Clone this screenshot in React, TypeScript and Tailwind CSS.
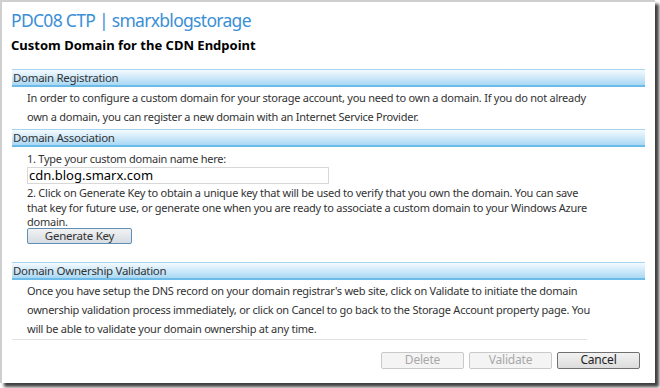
import React from "react";

// ========================
// Section header bar
// ========================

const SectionBar = ({ title }: { title: string }) => (
  <div className="mx-[10px] h-[18px] border-t border-[#a8d4f0] border-b-2 border-b-[#6dbbe8] bg-gradient-to-b from-[#f4fafe] to-[#a9d8f4] pl-[1px] text-[11.5px] leading-[16px] tracking-[-0.3px] text-[#333]">
    {title}
  </div>
);

const Btn = ({ label, disabled }: { label: string; disabled?: boolean }) => (
  <button
    className={
      disabled
        ? "h-[17px] w-[83px] rounded-[2px] border border-[#c9c9c9] bg-[#f4f4f4] text-[12px] leading-[14px] tracking-[-0.2px] text-[#a8a8a8]"
        : "h-[17px] w-[83px] rounded-[2px] border border-[#707070] bg-gradient-to-b from-[#f2f2f2] to-[#dcdcdc] text-[12px] leading-[14px] tracking-[-0.2px] text-[#222]"
    }
  >
    {label}
  </button>
);

export default function App() {
  return (
    <div className="h-[388px] w-[660px] bg-white" style={{ fontFamily: '"Noto Sans", "Open Sans", sans-serif' }}>
      <div className="flex h-[383px] w-[655px] flex-col border-l-2 border-t-2 border-[#cfcfcf] bg-white shadow-[4px_4px_3px_rgba(0,0,0,0.75)]">
        <div className="pl-[9px] pt-[6px] text-[17.5px] leading-[24px] tracking-[-0.7px] text-[#3b8fd6]">
          PDC08 CTP | smarxblogstorage
        </div>
        <div className="pl-[9px] pt-[4px] text-[13px] font-bold leading-[18px] text-black">
          Custom Domain for the CDN Endpoint
        </div>

        <div className="mt-[15px]">
          <SectionBar title="Domain Registration" />
          <div className="pl-[25px] pt-[1px] text-[11px] leading-[19px] tracking-[-0.25px] whitespace-nowrap text-[#333]">
            <div>In order to configure a custom domain for your storage account, you need to own a domain. If you do not already</div>
            <div>own a domain, you can register a new domain with an Internet Service Provider.</div>
          </div>
        </div>

        <div className="mt-[3px]">
          <SectionBar title="Domain Association" />
          <div className="pl-[25px] pt-[4px] text-[11px] tracking-[-0.25px] whitespace-nowrap text-[#333]">
            <div className="leading-[15px]">1. Type your custom domain name here:</div>
            <div className="mt-[1px] h-[17px] w-[302px] border border-[#d8d8d8] pl-[1px] text-[13px] leading-[15px] tracking-[0px] text-black">
              cdn.blog.smarx.com
            </div>
            <div className="mt-[2px] leading-[14.5px]">
              <div>2. Click on Generate Key to obtain a unique key that will be used to verify that you own the domain. You can save</div>
              <div>that key for future use, or generate one when you are ready to associate a custom domain to your Windows Azure</div>
              <div>domain.</div>
            </div>
            <div className="mt-[-2px] flex h-[16px] w-[105px] items-center justify-center rounded-[2px] border border-[#5e8fb6] bg-gradient-to-b from-[#f2f2f2] to-[#d6dde3] text-[11.5px] text-[#333]">
              Generate Key
            </div>
          </div>
        </div>

        <div className="mt-[18px]">
          <SectionBar title="Domain Ownership Validation" />
          <div className="pl-[25px] pt-[1px] text-[11px] leading-[19px] tracking-[-0.25px] whitespace-nowrap text-[#333]">
            <div>Once you have setup the DNS record on your domain registrar's web site, click on Validate to initiate the domain</div>
            <div>ownership validation process immediately, or click on Cancel to go back to the Storage Account property page. You</div>
            <div>will be able to validate your domain ownership at any time.</div>
          </div>
          <div className="ml-[10px] mt-[1px] h-px w-[575px] bg-[#e2e2e2]" />
        </div>

        <div className="mt-[12px] flex justify-end gap-[5px] pr-[15px]">
          <Btn label="Delete" disabled />
          <Btn label="Validate" disabled />
          <Btn label="Cancel" />
        </div>
      </div>
    </div>
  );
}
